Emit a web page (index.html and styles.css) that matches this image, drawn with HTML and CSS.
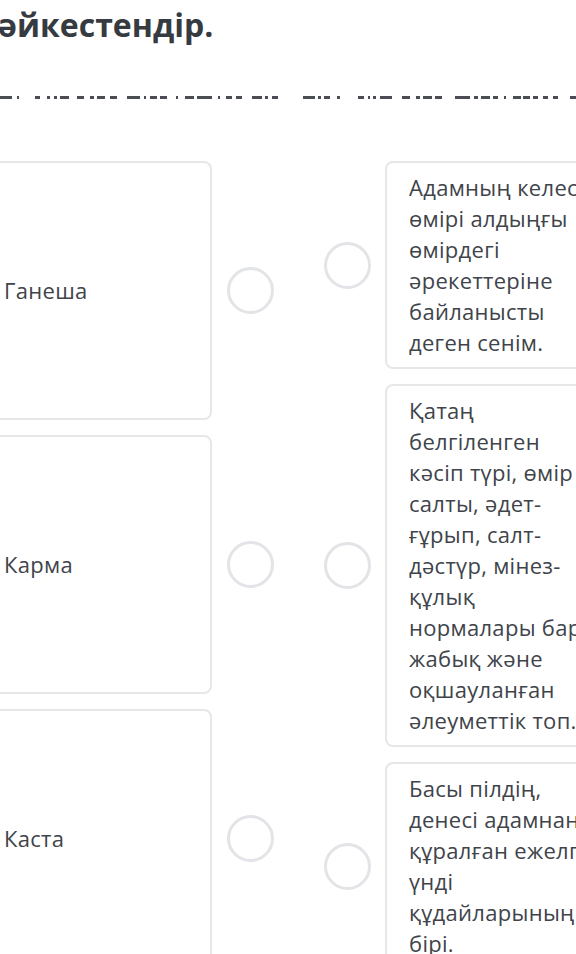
FILE: index.html
```html
<!DOCTYPE html>
<html lang="kk">
<head>
<meta charset="utf-8">
<title>Сәйкестендір</title>
<link rel="stylesheet" href="styles.css">
</head>
<body>
<div class="page">
  <h1 class="title">әйкестендір.</h1>
  <svg class="clipped-line" width="576" height="4" viewBox="0 0 576 4" aria-hidden="true">
    <g fill="#4a4e54">
      <rect x="0" y="0" width="12" height="3"/><rect x="17" y="0" width="2" height="3"/>
      <rect x="35" y="0" width="5" height="3"/><rect x="47" y="0" width="3" height="3"/><rect x="54" y="0" width="3" height="3"/><rect x="60" y="0" width="9" height="3"/><rect x="77" y="0" width="7" height="3"/><rect x="90" y="0" width="4" height="3"/><rect x="97" y="0" width="8" height="3"/><rect x="110" y="0" width="7" height="3"/>
      <rect x="127" y="0" width="13" height="3"/><rect x="144" y="0" width="2" height="3"/><rect x="150" y="0" width="7" height="3"/><rect x="160" y="0" width="7" height="3"/><rect x="176" y="0" width="2" height="3"/><rect x="185" y="0" width="9" height="3"/><rect x="197" y="0" width="15" height="3"/><rect x="218" y="0" width="2" height="3"/><rect x="226" y="0" width="6" height="3"/><rect x="236" y="0" width="6" height="3"/><rect x="252" y="0" width="10" height="3"/><rect x="265" y="0" width="3" height="3"/><rect x="272" y="0" width="6" height="3"/>
      <rect x="303" y="0" width="12" height="3"/><rect x="318" y="0" width="3" height="3"/><rect x="324" y="0" width="6" height="3"/><rect x="337" y="0" width="3" height="3"/>
      <rect x="358" y="0" width="6" height="3"/><rect x="368" y="0" width="2" height="3"/><rect x="373" y="0" width="3" height="3"/><rect x="380" y="0" width="12" height="3"/><rect x="402" y="0" width="8" height="3"/><rect x="416" y="0" width="4" height="3"/><rect x="423" y="0" width="9" height="3"/><rect x="435" y="0" width="7" height="3"/>
      <rect x="455" y="0" width="15" height="3"/><rect x="474" y="0" width="4" height="3"/><rect x="481" y="0" width="9" height="3"/><rect x="493" y="0" width="5" height="3"/><rect x="504" y="0" width="2" height="3"/><rect x="513" y="0" width="8" height="3"/><rect x="523" y="0" width="7" height="3"/><rect x="533" y="0" width="5" height="3"/><rect x="543" y="0" width="5" height="3"/><rect x="553" y="0" width="5" height="3"/><rect x="570" y="0" width="6" height="3"/>
    </g>
  </svg>

  <div class="board">
    <div class="column column-left">
      <div class="row">
        <div class="card card-term">Ганеша</div>
        <span class="dot"></span>
      </div>
      <div class="row">
        <div class="card card-term">Карма</div>
        <span class="dot"></span>
      </div>
      <div class="row">
        <div class="card card-term">Каста</div>
        <span class="dot"></span>
      </div>
    </div>

    <div class="column column-right">
      <div class="row">
        <span class="dot"></span>
        <div class="card card-def">Адамның келесі өмірі алдыңғы өмірдегі әрекеттеріне байланысты деген сенім.</div>
      </div>
      <div class="row">
        <span class="dot"></span>
        <div class="card card-def">Қатаң белгіленген кәсіп түрі, өмір салты, әдет-ғұрып, салт-дәстүр, мінез-құлық нормалары бар жабық және оқшауланған әлеуметтік топ.</div>
      </div>
      <div class="row">
        <span class="dot"></span>
        <div class="card card-def">Басы пілдің, денесі адамнан құралған ежелгі үнді құдайларының бірі.</div>
      </div>
    </div>
  </div>
</div>
</body>
</html>
```

FILE: styles.css
```css
html, body {
  margin: 0;
  padding: 0;
  background: #ffffff;
}

body {
  width: 576px;
  height: 954px;
  overflow: hidden;
  font-family: "Open Sans", "Noto Sans", sans-serif;
  color: #40444a;
}

.page {
  width: 576px;
}

.title {
  margin: 0;
  padding: 4px 0 0 0;
  margin-left: -2px;
  font-size: 32px;
  line-height: 42px;
  font-weight: 700;
  color: #363b41;
  white-space: nowrap;
}

.clipped-line {
  display: block;
  margin-top: 50px;
}

.board {
  display: flex;
  gap: 50px;
  margin-left: -20px;
  margin-top: 61px;
}

.column {
  display: flex;
  flex-direction: column;
  gap: 15px;
}

.row {
  display: flex;
  align-items: center;
}

.column-left .row {
  gap: 15px;
}

.column-right .row {
  gap: 14px;
}

.card {
  box-sizing: border-box;
  width: 232px;
  border: 2px solid #e6e7e9;
  border-radius: 8px;
  background: #ffffff;
  font-size: 22px;
  line-height: 31px;
  letter-spacing: 0.3px;
  color: #40444a;
}

.card-term {
  height: 259px;
  display: flex;
  align-items: center;
  padding: 0 22px;
}

.card-def {
  padding: 9px 22px;
}

.dot {
  flex: none;
  box-sizing: border-box;
  width: 47px;
  height: 47px;
  border: 3px solid #e2e4e7;
  border-radius: 50%;
}
```
